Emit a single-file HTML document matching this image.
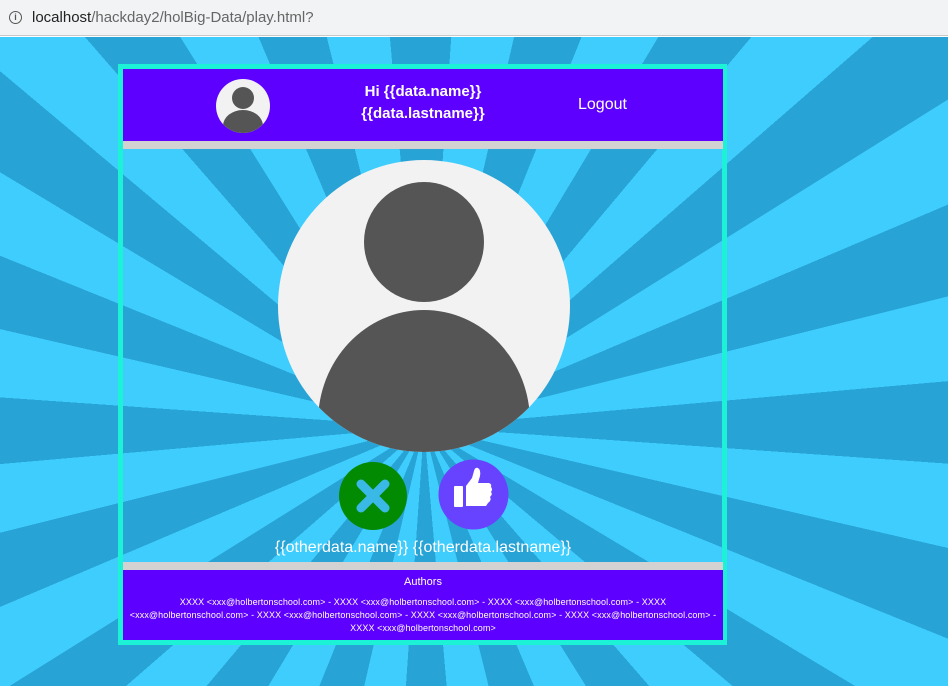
<!DOCTYPE html>
<html><head><style>
*{margin:0;padding:0;box-sizing:border-box}
body{width:948px;height:686px;overflow:hidden;font-family:"Liberation Sans",sans-serif;position:relative;background:#fff}
.bar{position:absolute;left:0;top:0;width:948px;height:36px;background:#f1f3f4;border-bottom:1px solid #c8c8c8}
.bar .url{position:absolute;left:32px;top:9px;font-size:15px;color:#666}
.bar .url b{font-weight:normal;color:#222}
.bar .i{position:absolute;left:9px;top:11px;width:13px;height:13px;border:1.5px solid #555;border-radius:50%;font-size:9px;text-align:center;line-height:10px;color:#555;font-weight:bold}
.bg{position:absolute;left:0;top:37px;width:948px;height:649px;background:repeating-conic-gradient(from 4deg at 424px 390px,#3ecdfd 0 9deg,#27a3d6 9deg 18deg)}
.box{position:absolute;left:118px;top:64px;width:609px;height:581px;border:5px solid #1cf3d6}
.hdr{position:absolute;left:0;top:0;width:600px;height:72px;background:#5e00ff;color:#fff}
.g1{position:absolute;left:0;top:72px;width:600px;height:8px;background:#d2d2d2}
.g2{position:absolute;left:0;top:493px;width:600px;height:8px;background:#d2d2d2}
.ftr{position:absolute;left:0;top:501px;width:600px;height:70px;background:#5e00ff;color:#fff;text-align:center}
.name{position:absolute;left:0;top:470px;width:600px;text-align:center;color:#fff;font-size:16px}
</style></head><body>
<div class="bar"><div class="i">i</div><div class="url"><b>localhost</b>/hackday2/holBig-Data/play.html?</div></div>
<div class="bg"></div>
<div class="box">
 <div class="hdr">
  <svg style="position:absolute;left:93px;top:10px" width="54" height="54" viewBox="0 0 54 54"><defs><clipPath id="c1"><circle cx="27" cy="27" r="27"/></clipPath></defs><circle cx="27" cy="27" r="27" fill="#f2f2f2"/><g clip-path="url(#c1)" fill="#555"><circle cx="27" cy="19" r="11"/><ellipse cx="27" cy="47" rx="20" ry="16"/></g></svg>
  <div style="position:absolute;left:200px;top:12px;width:200px;text-align:center;font-size:15px;font-weight:bold;line-height:22px">Hi {{data.name}}<br>{{data.lastname}}</div>
  <div style="position:absolute;left:455px;top:27px;font-size:16px">Logout</div>
 </div>
 <div class="g1"></div>
 <svg style="position:absolute;left:155px;top:91px" width="292" height="292" viewBox="0 0 292 292"><defs><clipPath id="c2"><circle cx="146" cy="146" r="146"/></clipPath></defs><circle cx="146" cy="146" r="146" fill="#f2f2f2"/><g clip-path="url(#c2)" fill="#555"><circle cx="146" cy="82" r="60"/><ellipse cx="146" cy="262" rx="106" ry="112"/></g></svg>
 <svg style="position:absolute;left:215px;top:392px" width="70" height="70" viewBox="0 0 70 70"><circle cx="35" cy="35" r="34" fill="#038a03"/><g stroke="#3ab8e6" stroke-width="9" stroke-linecap="round"><line x1="23" y1="23" x2="47" y2="47"/><line x1="47" y1="23" x2="23" y2="47"/></g></svg>
 <svg style="position:absolute;left:315px;top:390px" width="71" height="71" viewBox="0 0 71 71"><circle cx="35.5" cy="35.5" r="35" fill="#6843ff"/><g fill="#fff"><rect x="16" y="27" width="9" height="21" rx="1"/><path d="M28 27 L34 19 L36 12 Q37 8 40 9 Q43 11 42 17 L40 24 L51 24 Q54 25 53 28 Q55 30 53 33 Q55 35 52 38 Q54 41 50 44 L48 47 L28 47 Z"/></g></svg>
 <div class="name">{{otherdata.name}} {{otherdata.lastname}}</div>
 <div class="g2"></div>
 <div class="ftr">
  <div style="font-size:11px;padding-top:6px">Authors</div>
  <div style="font-size:9px;line-height:13px;padding:8px 6px 0;letter-spacing:0.1px">XXXX &lt;xxx@holbertonschool.com&gt; - XXXX &lt;xxx@holbertonschool.com&gt; - XXXX &lt;xxx@holbertonschool.com&gt; - XXXX &lt;xxx@holbertonschool.com&gt; - XXXX &lt;xxx@holbertonschool.com&gt; - XXXX &lt;xxx@holbertonschool.com&gt; - XXXX &lt;xxx@holbertonschool.com&gt; - XXXX &lt;xxx@holbertonschool.com&gt;</div>
 </div>
</div>
</body></html>
